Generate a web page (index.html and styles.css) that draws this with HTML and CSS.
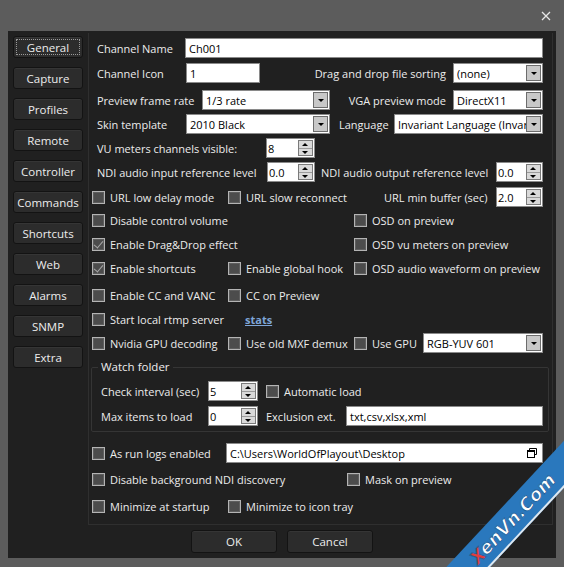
FILE: index.html
```html
<!DOCTYPE html>
<html lang="en">
<head>
    <meta charset="UTF-8">
    <meta name="viewport" content="width=device-width, initial-scale=1.0">
    <title>Channel Settings</title>
    <link rel="stylesheet" href="styles.css">
</head>
<body>
<div class="window">
    <div class="titlebar">
        <svg class="close" width="10" height="10" viewBox="0 0 10 10"><path d="M1 1L9 9M9 1L1 9" stroke="#e6e6e6" stroke-width="1.3"/></svg>
    </div>

    <div class="client">
        <div class="main">
            <!-- settings sections -->
            <div class="tabs">
                <button class="tab active">General</button>
                <button class="tab">Capture</button>
                <button class="tab">Profiles</button>
                <button class="tab">Remote</button>
                <button class="tab">Controller</button>
                <button class="tab">Commands</button>
                <button class="tab">Shortcuts</button>
                <button class="tab">Web</button>
                <button class="tab">Alarms</button>
                <button class="tab">SNMP</button>
                <button class="tab">Extra</button>
            </div>

            <div class="page">
                <div class="row">
                    <label class="lbl w93">Channel Name</label>
                    <div class="txt grow">Ch001</div>
                </div>

                <div class="row gap5">
                    <label class="lbl w94">Channel Icon</label>
                    <div class="txt w74">1</div>
                    <label class="lbl-r">Drag and drop file sorting</label>
                    <div class="sel w90"><span>(none)</span><i class="arr"></i></div>
                </div>

                <div class="row gap7">
                    <label class="lbl w110">Preview frame rate</label>
                    <div class="sel w128"><span>1/3 rate</span><i class="arr"></i></div>
                    <label class="lbl-r">VGA preview mode</label>
                    <div class="sel w90"><span>DirectX11</span><i class="arr"></i></div>
                </div>

                <div class="row">
                    <label class="lbl w94">Skin template</label>
                    <div class="sel w144"><span>2010 Black</span><i class="arr"></i></div>
                    <label class="lbl w64 pl9">Language</label>
                    <div class="sel grow"><span>Invariant Language (Invariant Country)</span><i class="arr"></i></div>
                </div>

                <div class="row">
                    <label class="lbl w174">VU meters channels visible:</label>
                    <div class="spin w49"><span>8</span><i class="btns"><b class="up"></b><b class="dn"></b></i></div>
                </div>

                <div class="row">
                    <label class="lbl w175">NDI audio input reference level</label>
                    <div class="spin w48"><span>0.0</span><i class="btns"><b class="up"></b><b class="dn"></b></i></div>
                    <label class="lbl w181 pl6">NDI audio output reference level</label>
                    <div class="spin w47"><span>0.0</span><i class="btns"><b class="up"></b><b class="dn"></b></i></div>
                </div>

                <div class="row gap5">
                    <label class="chk w136"><input type="checkbox">URL low delay mode</label>
                    <label class="chk w151"><input type="checkbox">URL slow reconnect</label>
                    <label class="lbl w117">URL min buffer (sec)</label>
                    <div class="spin w47"><span>2.0</span><i class="btns"><b class="up"></b><b class="dn"></b></i></div>
                </div>

                <div class="row gap3">
                    <label class="chk w262"><input type="checkbox">Disable control volume</label>
                    <label class="chk"><input type="checkbox">OSD on preview</label>
                </div>

                <div class="row">
                    <label class="chk w262"><input type="checkbox" checked>Enable Drag&amp;Drop effect</label>
                    <label class="chk"><input type="checkbox">OSD vu meters on preview</label>
                </div>

                <div class="row">
                    <label class="chk w136"><input type="checkbox" checked>Enable shortcuts</label>
                    <label class="chk w126"><input type="checkbox">Enable global hook</label>
                    <label class="chk"><input type="checkbox">OSD audio waveform on preview</label>
                </div>

                <div class="row gap7">
                    <label class="chk w136"><input type="checkbox">Enable CC and VANC</label>
                    <label class="chk"><input type="checkbox">CC on Preview</label>
                </div>

                <div class="row">
                    <label class="chk w153"><input type="checkbox">Start local rtmp server</label>
                    <a class="link" href="#">stats</a>
                </div>

                <div class="row">
                    <label class="chk w136"><input type="checkbox">Nvidia GPU decoding</label>
                    <label class="chk w126"><input type="checkbox">Use old MXF demux</label>
                    <label class="chk w69"><input type="checkbox">Use GPU</label>
                    <div class="sel grow"><span>RGB-YUV 601</span><i class="arr"></i></div>
                </div>

                <fieldset class="group">
                    <legend>Watch folder</legend>
                    <div class="row first">
                        <label class="lbl-g w107">Check interval (sec)</label>
                        <div class="spin w50"><span>5</span><i class="btns"><b class="up"></b><b class="dn"></b></i></div>
                        <label class="chk pl8"><input type="checkbox">Automatic load</label>
                    </div>
                    <div class="row gap5">
                        <label class="lbl-g w107">Max items to load</label>
                        <div class="spin w50"><span>0</span><i class="btns"><b class="up"></b><b class="dn"></b></i></div>
                        <label class="lbl-g w88 pl8">Exclusion ext.</label>
                        <div class="txt grow">txt,csv,xlsx,xml</div>
                    </div>
                </fieldset>

                <div class="row gap11">
                    <label class="chk w134"><input type="checkbox">As run logs enabled</label>
                    <div class="txt grow path">
                        <span>C:\Users\WorldOfPlayout\Desktop</span>
                        <svg width="12" height="12" viewBox="0 0 12 12"><path d="M3.5 3.5V1.5h7v6h-2" fill="none" stroke="#000"/><rect x="1.5" y="3.5" width="7" height="7" fill="#fff" stroke="#000"/><path d="M1.5 4.5h7" stroke="#000"/></svg>
                    </div>
                </div>

                <div class="row gap6">
                    <label class="chk w255"><input type="checkbox">Disable background NDI discovery</label>
                    <label class="chk"><input type="checkbox">Mask on preview</label>
                </div>

                <div class="row gap7">
                    <label class="chk w136"><input type="checkbox">Minimize at startup</label>
                    <label class="chk"><input type="checkbox">Minimize to icon tray</label>
                </div>
            </div>
        </div>

        <div class="footer">
            <button class="btn">OK</button>
            <button class="btn">Cancel</button>
        </div>
    </div>

    <div class="ribbon"><span><em>X</em>enVn.Com</span></div>
</div>
</body>
</html>
```

FILE: styles.css
```css
* {
    box-sizing: border-box;
}

body {
    margin: 0;
    background: #5c5c5c;
    font-family: "Open Sans", "Noto Sans", sans-serif;
    font-size: 11px;
    color: #ececec;
}

.window {
    position: relative;
    width: 564px;
    height: 567px;
    background: #5c5c5c;
    overflow: hidden;
}

.titlebar {
    height: 31px;
    display: flex;
    justify-content: flex-end;
    align-items: center;
    padding-right: 13px;
}

.client {
    margin: 0 8px;
    height: 527px;
    background: #202020;
    display: flex;
    flex-direction: column;
}

.main {
    flex: 1;
    display: flex;
    min-height: 0;
}

/* left column of section buttons */
.tabs {
    width: 80px;
    flex: none;
    padding: 5px 0 0 5px;
    display: flex;
    flex-direction: column;
    gap: 9px;
}

.tab,
.btn {
    position: relative;
    height: 22px;
    width: 70px;
    padding: 0;
    background: #2c2c2c;
    border: 1px solid #131313;
    border-radius: 3px;
    box-shadow: inset 0 1px 0 #353535;
    color: #ececec;
    font: inherit;
    font-size: 11.5px;
}

.tab.active::after {
    content: "";
    position: absolute;
    inset: 2px;
    border: 1px dotted #9a9a9a;
}

.page {
    flex: 1;
    min-width: 0;
    margin: 2px 3px 0 0;
    border: 1px solid #2f2f2f;
    border-top: 0;
    padding: 5px 9px 0 3px;
}

.row {
    display: flex;
    align-items: center;
    height: 20px;
    margin-top: 4px;
}

.row:first-child,
.row.first {
    margin-top: 0;
}

.gap3 { margin-top: 3px; }
.gap5 { margin-top: 5px; }
.gap6 { margin-top: 6px; }
.gap7 { margin-top: 7px; }
.gap11 { margin-top: 11px; }

.w47 { width: 47px; }
.w48 { width: 48px; }
.w49 { width: 49px; }
.w50 { width: 50px; }
.w64 { width: 64px; }
.w69 { width: 69px; }
.w74 { width: 74px; }
.w88 { width: 88px; }
.w90 { width: 90px; }
.w93 { width: 93px; }
.w94 { width: 94px; }
.w107 { width: 107px; }
.w110 { width: 110px; }
.w117 { width: 117px; }
.w126 { width: 126px; }
.w128 { width: 128px; }
.w134 { width: 134px; }
.w136 { width: 136px; }
.w144 { width: 144px; }
.w151 { width: 151px; }
.w153 { width: 153px; }
.w174 { width: 174px; }
.w175 { width: 175px; }
.w181 { width: 181px; }
.w255 { width: 255px; }
.w262 { width: 262px; }

.lbl,
.lbl-g,
.chk {
    flex: none;
    white-space: nowrap;
}

.lbl { padding-left: 5px; }
.lbl-g { padding-left: 0; }

/* right-aligned label that takes the slack before a control */
.lbl-r {
    flex: 1;
    min-width: 0;
    white-space: nowrap;
    text-align: right;
    padding-right: 7px;
}

.pl6 { padding-left: 6px; }
.pl8 { padding-left: 8px; }
.pl9 { padding-left: 9px; }

.chk {
    display: flex;
    align-items: center;
    gap: 5px;
}

.chk input {
    appearance: none;
    position: relative;
    width: 13px;
    height: 13px;
    margin: 0;
    background: #4c4c4c;
    border: 1px solid #b4b4b4;
    box-shadow: inset 0 0 0 1px #5e5e5e;
}

.chk input:checked::after {
    content: "";
    position: absolute;
    left: 3px;
    top: 0px;
    width: 4px;
    height: 8px;
    border: solid #a8a8a8;
    border-width: 0 1.5px 1.5px 0;
    transform: rotate(40deg);
}

/* white edit fields */
.txt,
.sel,
.spin {
    height: 20px;
    flex: none;
    background: #fff;
    border: 1px solid #8a8a8a;
    color: #000;
    display: flex;
    align-items: center;
    padding-left: 3px;
    white-space: nowrap;
}

.txt.grow,
.sel.grow {
    flex: 1;
    min-width: 0;
}

.sel span,
.path span {
    flex: 1;
    min-width: 0;
    overflow: hidden;
}

.arr {
    position: relative;
    flex: none;
    width: 15px;
    height: 16px;
    margin-right: 1px;
    background: #c8c8c8;
    border: 1px solid #6c6c6c;
}

.arr::after {
    content: "";
    position: absolute;
    left: 4px;
    top: 6px;
    border: 3px solid transparent;
    border-top: 3px solid #000;
}

.spin {
    padding-left: 1px;
}

.spin span {
    flex: 1;
}

.btns {
    width: 15px;
    height: 16px;
    margin-right: 1px;
    display: flex;
    flex-direction: column;
    border: 1px solid #7a7a7a;
    background: #d9d9d9;
}

.btns b {
    position: relative;
    flex: 1;
}

.btns .up {
    border-bottom: 1px solid #9a9a9a;
}

.btns b::after {
    content: "";
    position: absolute;
    left: 3px;
    border: 3px solid transparent;
}

.btns .up::after {
    top: -1px;
    border-bottom: 3px solid #000;
}

.btns .dn::after {
    top: 2px;
    border-top: 3px solid #000;
}

.path {
    padding-right: 4px;
}

.link {
    color: #7ea6d8;
    font-weight: bold;
    text-decoration: underline;
}

/* Watch folder group box */
.group {
    margin: 6px -6px 0 -1px;
    padding: 6px 5px 5px 9px;
    border: 1px solid #353535;
    border-radius: 2px;
    min-width: 0;
}

.group legend {
    padding: 0 3px;
    margin-left: -3px;
    line-height: 16px;
    font-size: 11.5px;
}

.footer {
    height: 33px;
    flex: none;
    display: flex;
    justify-content: center;
    gap: 10px;
    padding-top: 5px;
}

.btn {
    width: 86px;
    height: 23px;
}

/* site stamp in the corner */
.ribbon {
    position: absolute;
    left: 403px;
    top: 503px;
    width: 220px;
    height: 32px;
    background: #2a78bd;
    border-bottom: 2px solid #dfe8f0;
    transform: rotate(-47deg);
    display: flex;
    align-items: center;
    justify-content: center;
}

.ribbon span {
    font-family: "DejaVu Sans", sans-serif;
    font-size: 18px;
    font-weight: bold;
    font-style: italic;
    color: #fff;
    -webkit-text-stroke: 0.8px #1f5f9a;
}

.ribbon em {
    color: #e43c3c;
}
```
